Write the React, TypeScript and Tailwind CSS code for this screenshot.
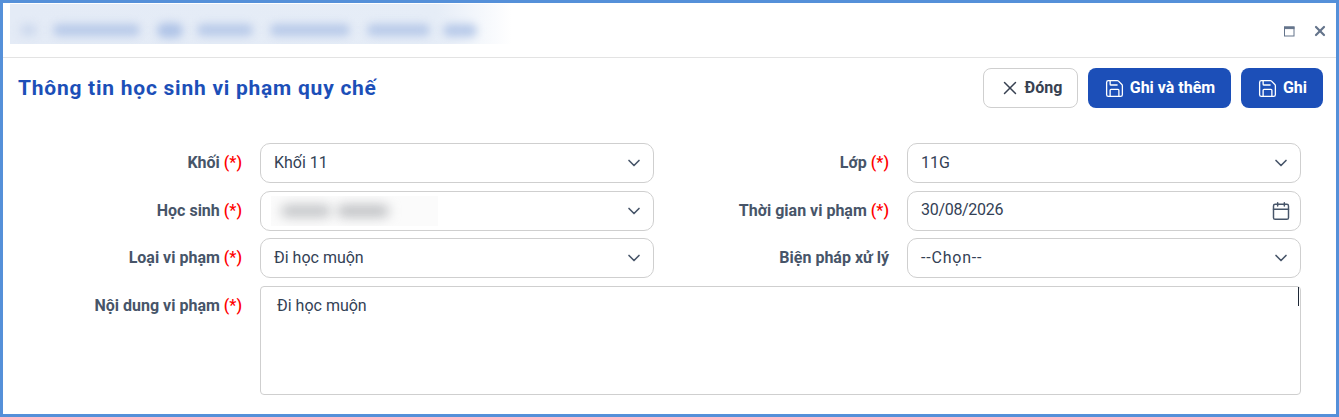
import { Save, X, ChevronDown, Calendar } from "lucide-react";

function Label({ text, star = true }: { text: string; star?: boolean }) {
  return (
    <div className="text-right text-[16px] font-bold text-[#475569] whitespace-nowrap leading-[40px] pr-[18px]">
      {text}
      {star && <span className="text-[#ff0000] font-medium"> (*)</span>}
    </div>
  );
}

function Select({ value, blurred, spaced }: { value?: string; blurred?: boolean; spaced?: boolean }) {
  return (
    <div className="relative h-10 border border-[#cfcfcf] rounded-[10px] flex items-center justify-between pl-[13px] pr-[9px] text-[16px] text-[#334155]">
      {blurred ? (
        <div className="absolute left-[10px] top-[4px] w-[167px] h-[30px] bg-[#fbfbfb] overflow-hidden flex">
          <div className="ml-[10px] mt-[9px] w-[50px] h-[12px] bg-[#c0c2c5] blur-[6px] rounded-full" />
          <div className="ml-[6px] mt-[9px] w-[52px] h-[12px] bg-[#bcbec1] blur-[6px] rounded-full" />
        </div>
      ) : (
        <span className={spaced ? "-mt-[1px] tracking-[0.8px]" : "-mt-[1px]"}>{value}</span>
      )}
      <span className="flex-1" />
      <ChevronDown size={20} strokeWidth={2} className="text-[#475569]" />
    </div>
  );
}

function Button({ icon, text, primary, className }: { icon: React.ReactNode; text: string; primary?: boolean; className: string }) {
  return (
    <button
      className={
        "h-10 rounded-[8px] flex items-center justify-center text-[16px] font-bold " +
        (primary ? "bg-[#1c4fb8] text-white " : "bg-white border border-[#cfcfcf] text-[#374151] ") +
        className
      }
    >
      {icon}
      {text}
    </button>
  );
}

export default function App() {
  return (
    <div
      className="w-[1339px] h-[417px] bg-white border-[3px] border-[#5590d9] overflow-hidden"
      style={{ fontFamily: "Roboto, sans-serif" }}
    >
      <div className="h-[55px] border-b border-[#e3e3e3] flex items-start justify-between">
        <div className="ml-[7px] mt-[1px] w-[502px] h-[40px] bg-gradient-to-r from-[#e4ebf6] via-[#e6edf7] via-[85%] to-white overflow-hidden flex items-center pl-[10px] pt-[12px]">
          <div className="w-[17px] h-[12px] rounded-full bg-[#cdd9ee] blur-[4px]" />
          <div className="ml-[16px] w-[87px] h-[12px] rounded-full bg-[#b8cae9] blur-[4px]" />
          <div className="ml-[17px] w-[26px] h-[15px] rounded-full bg-[#b0c4e7] blur-[4px]" />
          <div className="ml-[14px] w-[56px] h-[12px] rounded-full bg-[#b8cae9] blur-[4px]" />
          <div className="ml-[17px] w-[80px] h-[12px] rounded-full bg-[#b8cae9] blur-[4px]" />
          <div className="ml-[17px] w-[63px] h-[12px] rounded-full bg-[#b8cae9] blur-[4px]" />
          <div className="ml-[13px] w-[34px] h-[13px] rounded-full bg-[#b8cae9] blur-[4px]" />
        </div>
        <div className="flex items-center gap-[17px] mt-[20px] mr-[8px] text-[#64748b]">
          <svg width="11" height="11" viewBox="0 0 11 11" fill="none" stroke="currentColor">
            <rect x="0.5" y="1" width="9.5" height="9" strokeWidth="1" />
            <rect x="0.5" y="1" width="9.5" height="1.6" fill="currentColor" strokeWidth="1" />
          </svg>
          <X size={16} strokeWidth={3.25} />
        </div>
      </div>

      <div className="flex items-start justify-between pl-[15px] pr-[13px] pt-[10px]">
        <h1 className="text-[21px] font-bold text-[#1c4fb8] leading-[40px] tracking-[0.75px]">
          Thông tin học sinh vi phạm quy chế
        </h1>
        <div className="flex gap-[10px]">
          <Button
            text="Đóng"
            className="w-[95px]"
            icon={<X size={22} strokeWidth={1.6} className="mr-[4px] text-[#374151]" />}
          />
          <Button
            primary
            text="Ghi và thêm"
            className="w-[143px]"
            icon={<Save size={21} strokeWidth={1.5} className="mr-[5px]" />}
          />
          <Button
            primary
            text="Ghi"
            className="w-[82px]"
            icon={<Save size={21} strokeWidth={1.5} className="mr-[5px]" />}
          />
        </div>
      </div>

      <div className="mt-[35px] mr-[35px] grid grid-cols-[257px_394px_253px_394px] gap-y-[7.6px]">
        <Label text="Khối" />
        <Select value="Khối 11" />
        <Label text="Lớp" />
        <Select value="11G" />

        <Label text="Học sinh" />
        <Select blurred />
        <Label text="Thời gian vi phạm" />
        <div className="h-10 border border-[#cfcfcf] rounded-[10px] flex items-center justify-between pl-[13px] pr-[9px] text-[16px] text-[#334155]">
          <span className="-mt-[1px] tracking-[-0.3px]">30/08/2026</span>
          <Calendar size={20} strokeWidth={1.75} className="text-[#475569]" />
        </div>

        <Label text="Loại vi phạm" />
        <Select value="Đi học muộn" />
        <Label text="Biện pháp xử lý" star={false} />
        <Select value="--Chọn--" spaced />

        <Label text="Nội dung vi phạm" />
        <div className="col-span-3 relative h-[109px] border border-[#cfcfcf] rounded-[4px] pl-[16px] pt-[8px] text-[16px] leading-[22px] text-[#334155]">
          Đi học muộn
          <div className="absolute right-[1px] top-0 w-[1px] h-[19px] bg-[#1f2937]" />
        </div>
      </div>
    </div>
  );
}
